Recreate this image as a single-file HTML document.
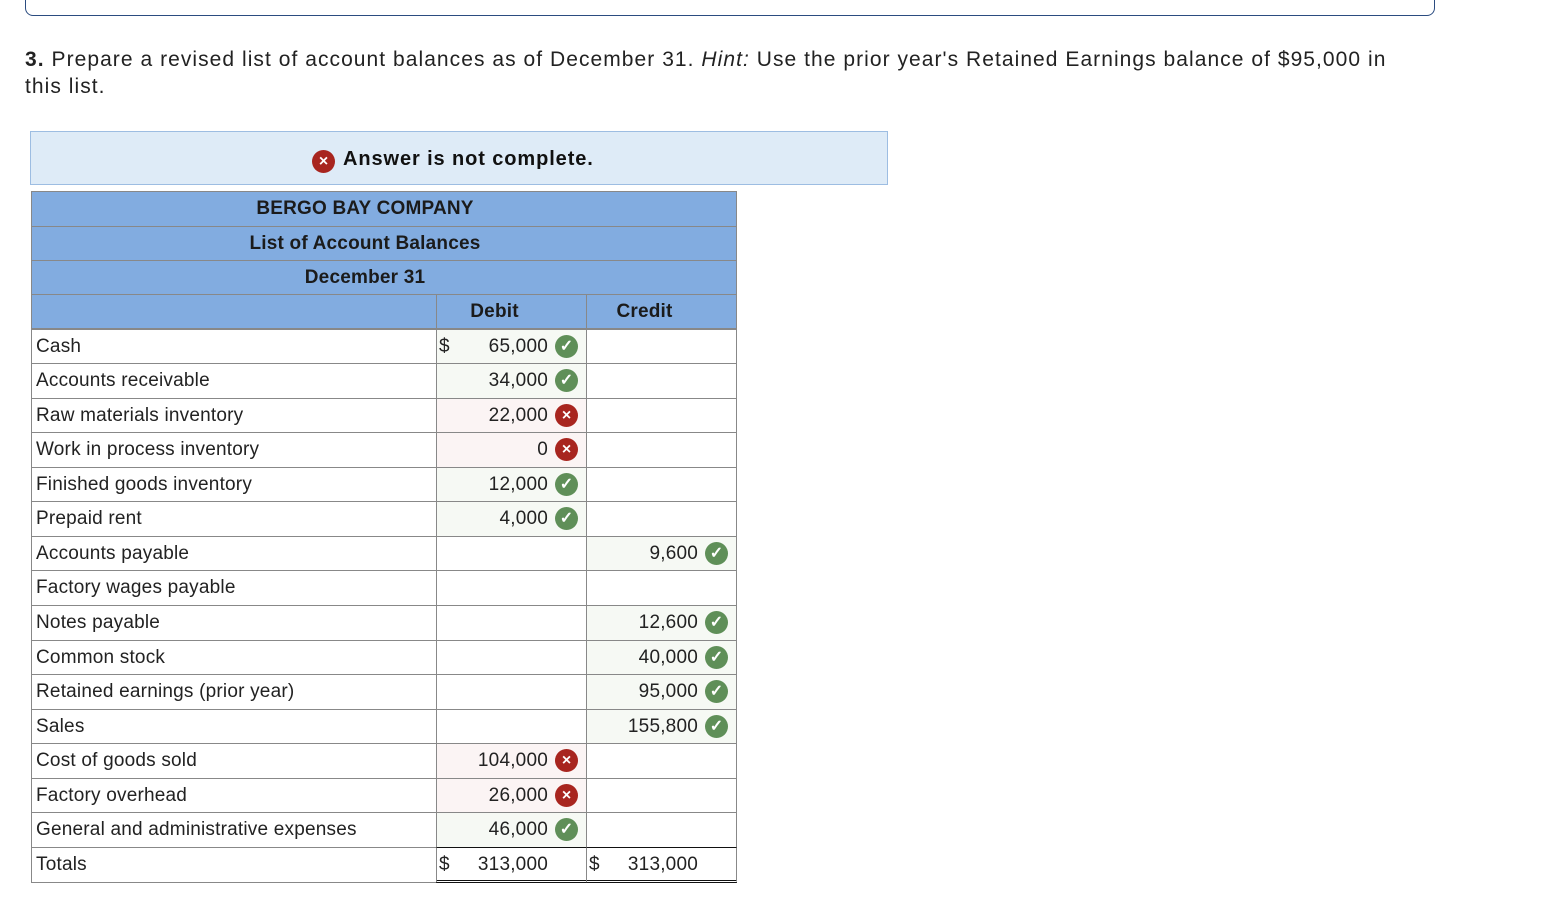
<!DOCTYPE html>
<html><head><meta charset="utf-8"><style>
body{margin:0;width:1556px;height:924px;background:#fff;font-family:"Liberation Sans",Arial,sans-serif;color:#222;position:relative;overflow:hidden}
.top{position:absolute;left:25px;top:-10px;width:1408px;height:24px;border:1px solid #2b4c80;border-radius:8px}
.q{position:absolute;left:25px;top:46px;width:1385px;font-size:21px;line-height:27px;color:#222;letter-spacing:1.05px}
.banner{position:absolute;left:30px;top:131px;width:856px;height:52px;background:#deebf7;border:1px solid #9dbde2}
.banner div{position:absolute;left:281px;top:16px;font-weight:bold;font-size:20px;color:#111;letter-spacing:0.9px}
.ic{display:inline-block;width:23px;height:23px;border-radius:50%;position:absolute;color:#fff;text-align:center;font-size:16px;line-height:23px;font-weight:bold;letter-spacing:0}
.r{background:#a8251f}.g{background:#5f8f58}
.c{position:absolute;box-sizing:border-box;border:1px solid #888;font-size:19px;letter-spacing:0.2px}
.h{background:#82ace0;font-weight:bold;text-align:center;color:#1b1b1b}
</style></head><body>
<div class="top"></div>
<div class="q"><b>3.</b> Prepare a revised list of account balances as of December 31. <i>Hint:</i> Use the prior year's Retained Earnings balance of $95,000 in this list.</div>
<div class="banner"><div><span class="ic r" style="left:0;top:2px;position:absolute">×</span><span style="margin-left:31px">Answer is not complete.</span></div></div>
<div id="t"></div>
<script>
var t=document.getElementById('t'),h='';
function cell(x,y,w,hh,cls,html,st){h+='<div class="c '+cls+'" style="left:'+x+'px;top:'+y+'px;width:'+w+'px;height:'+hh+'px;'+(st||'')+'">'+html+'</div>';}
cell(31,191,706,36,'h','<div style="line-height:33px;padding-right:38px">BERGO BAY COMPANY</div>');
cell(31,226,706,35,'h','<div style="line-height:33px;padding-right:38px">List of Account Balances</div>');
cell(31,260,706,35,'h','<div style="line-height:33px;padding-right:38px">December 31</div>');
cell(31,294,406,35,'h','');
cell(436,294,151,35,'h','<div style="line-height:33px;padding-right:34px">Debit</div>');
cell(586,294,151,35,'h','<div style="line-height:33px;padding-right:34px">Credit</div>');
var rows=[["Cash","65,000","g","",""],["Accounts receivable","34,000","g","",""],["Raw materials inventory","22,000","r","",""],["Work in process inventory","0","r","",""],["Finished goods inventory","12,000","g","",""],["Prepaid rent","4,000","g","",""],["Accounts payable","","","9,600","g"],["Factory wages payable","","","",""],["Notes payable","","","12,600","g"],["Common stock","","","40,000","g"],["Retained earnings (prior year)","","","95,000","g"],["Sales","","","155,800","g"],["Cost of goods sold","104,000","r","",""],["Factory overhead","26,000","r","",""],["General and administrative expenses","46,000","g","",""]];
function val(v,k,dollar){
 if(!v&&!dollar)return '';
 var s=(dollar?'<span style="position:absolute;left:2px;top:6px">$</span>':'')+'<span style="position:absolute;right:38px;top:6px">'+v+'</span>';
 if(k)s+='<span class="ic '+k+'" style="right:8px;top:5px">'+(k=='g'?'✓':'×')+'</span>';
 return s;}
function bg(k){return k=='g'?'background:#f6f9f4;':k=='r'?'background:#fbf4f4;':'';}
function Y(i){return Math.round(328.5+i*34.56);}
for(var i=0;i<rows.length;i++){var y=Y(i),hh=Y(i+1)-y+1,r=rows[i];
 cell(31,y,406,hh,'','<span style="position:absolute;left:4px;top:6px">'+r[0]+'</span>');
 cell(436,y,151,hh,'',val(r[1],r[2],i==0),bg(r[2]));
 cell(586,y,151,hh,'',val(r[3],r[4],false),bg(r[4]));}
var y=Y(15);
cell(31,y,406,36,'','<span style="position:absolute;left:4px;top:6px">Totals</span>');
cell(436,y,151,36,'',val('313,000','',true),'border-top:1.5px solid #111;border-bottom:3px double #111;');
cell(586,y,151,36,'',val('313,000','',true),'border-top:1.5px solid #111;border-bottom:3px double #111;');
t.innerHTML=h;
</script>
</body></html>
